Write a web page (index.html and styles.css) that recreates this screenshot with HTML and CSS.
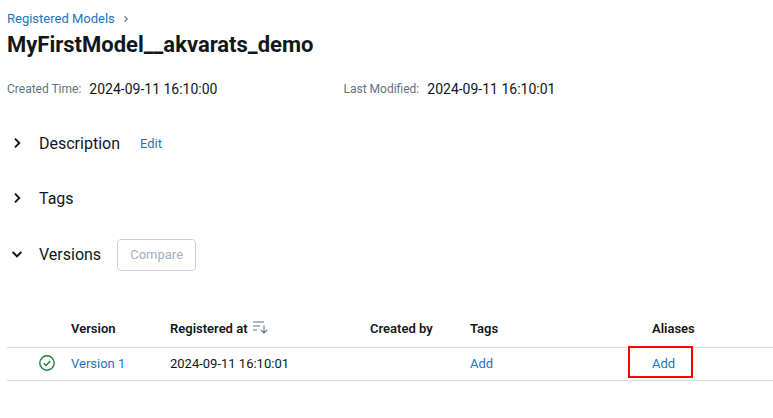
FILE: index.html
```html
<!DOCTYPE html>
<html lang="en">
<head>
<meta charset="utf-8">
<title>MyFirstModel__akvarats_demo</title>
<link rel="stylesheet" href="styles.css">
</head>
<body>
<nav class="crumbs"><a class="link">Registered Models</a>
<svg class="crumb-sep" viewBox="0 0 8 8" width="8" height="8"><path d="M2.5 1.2 5.3 4 2.5 6.8" fill="none" stroke="#5f7281" stroke-width="1.1"/></svg></nav>
<h1 class="title">MyFirstModel__akvarats_demo</h1>
<div class="meta">
  <div class="meta-item"><span class="meta-label">Created Time:</span><span class="meta-value">2024-09-11 16:10:00</span></div>
  <div class="meta-item"><span class="meta-label">Last Modified:</span><span class="meta-value">2024-09-11 16:10:01</span></div>
</div>
<section class="section sec-desc">
  <svg class="chev" viewBox="0 0 12 12" width="12" height="12"><path d="M4 1.6 8.3 6 4 10.4" fill="none" stroke="#11171c" stroke-width="1.9"/></svg>
  <span class="sec-title">Description</span><a class="link edit">Edit</a>
</section>
<section class="section sec-tags">
  <svg class="chev" viewBox="0 0 12 12" width="12" height="12"><path d="M4 1.6 8.3 6 4 10.4" fill="none" stroke="#11171c" stroke-width="1.9"/></svg>
  <span class="sec-title">Tags</span>
</section>
<section class="section sec-versions">
  <svg class="chev" viewBox="0 0 12 12" width="12" height="12"><path d="M1.6 4 6 8.3 10.4 4" fill="none" stroke="#11171c" stroke-width="1.9"/></svg>
  <span class="sec-title">Versions</span><button class="compare" disabled>Compare</button>
</section>
<div class="table">
  <div class="row head">
    <div class="c-status"></div>
    <div class="c-version">Version</div>
    <div class="c-reg">Registered at
      <svg class="sort" viewBox="0 0 16 14" width="16" height="14"><path d="M1 2h11M1 6h7M1 10h4M12 5.5v7.5M8.8 9.8l3.2 3.2 3.2-3.2" fill="none" stroke="#5f7281" stroke-width="1.1"/></svg></div>
    <div class="c-by">Created by</div>
    <div class="c-tags">Tags</div>
    <div class="c-alias">Aliases</div>
  </div>
  <div class="row body">
    <div class="c-status"><svg viewBox="0 0 16 16" width="16" height="16"><circle cx="8" cy="8" r="7.2" fill="none" stroke="#277c43" stroke-width="1.4"/><path d="M4.8 8.3 7 10.4 11.2 5.9" fill="none" stroke="#277c43" stroke-width="1.4"/></svg></div>
    <div class="c-version"><a class="link">Version 1</a></div>
    <div class="c-reg">2024-09-11 16:10:01</div>
    <div class="c-by"></div>
    <div class="c-tags"><a class="link">Add</a></div>
    <div class="c-alias"><a class="link">Add</a><span class="highlight"></span></div>
  </div>
</div>
</body>
</html>
```
FILE: styles.css
```css
* { box-sizing: border-box; }
html, body { margin: 0; padding: 0; }
body {
  width: 773px; height: 418px; overflow: hidden; background: #fff;
  font-family: Roboto, "Liberation Sans", sans-serif; font-size: 13px; color: #11171c;
  padding: 10px 0 0 7px;
}
.link { color: #2374bb; }
.crumbs { height: 18px; line-height: 18px; font-size: 13px; display: flex; align-items: center; }
.crumb-sep { margin-left: 7px; }
.title { margin: 3px 0 0; font-size: 22px; line-height: 28px; font-weight: 700; }
.meta { display: flex; margin-top: 20px; height: 20px; align-items: center; }
.meta-item { width: 336.5px; display: flex; align-items: center; }
.meta-label { color: #5f7281; font-size: 12px; margin-right: 8px; }
.meta-value { font-size: 14px; }
.section { display: flex; align-items: center; height: 32px; }
.chev { margin-left: 4px; margin-right: 16px; flex: none; }
.sec-title { font-size: 16px; }
.sec-desc { margin-top: 28px; }
.sec-tags { margin-top: 23px; }
.sec-versions { margin-top: 24px; }
.edit { margin-left: 20px; font-size: 13px; }
.compare {
  margin: 2px 0 0 16px; width: 79px; height: 32px; padding: 0 0 2px; background: #fff;
  border: 1px solid #c7d2dc; border-radius: 4px; color: #9fb0bf;
  font: 13px Roboto, sans-serif;
}
.table { margin-top: 40px; width: 766px; }
.row { display: flex; align-items: center; }
.head { height: 38px; font-weight: 600; border-bottom: 1px solid #d1d9e1; }
.body { height: 33px; padding-bottom: 2px; border-bottom: 1px solid #d1d9e1; }
.c-status { width: 64px; padding-left: 32px; display: flex; align-items: center; }
.c-version { width: 99px; }
.c-reg { width: 200px; display: flex; align-items: center; }
.sort { margin-left: 4px; margin-bottom: 4px; }
.c-by { width: 100px; }
.c-tags { width: 182px; }
.c-alias { position: relative; }
.highlight {
  position: absolute; left: -24px; top: -10px; width: 65px; height: 32px;
  border: 2px solid #f00;
}
```
